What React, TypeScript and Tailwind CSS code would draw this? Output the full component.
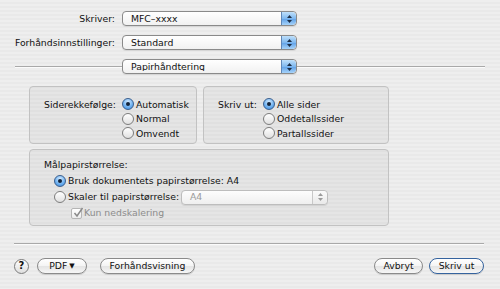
import React from 'react';

const FONT = "font-['DejaVu_Sans',_'Liberation_Sans',_sans-serif]";

function Stepper({ disabled }: { disabled?: boolean }) {
  return (
    <div
      className={
        'flex h-full w-[15px] shrink-0 flex-col items-center justify-center gap-[2px] rounded-r-[4px] border-l ' +
        (disabled
          ? 'border-[#c8c8c8] bg-[linear-gradient(#fbfbfb,#e9e9e9)]'
          : 'border-[#5f87b8] bg-[linear-gradient(#bfe0fb,#7fb8ef_50%,#5d9fe6_51%,#a6d3fa)]')
      }
    >
      <svg width="5" height="3" viewBox="0 0 5 3">
        <path d="M2.5 0L5 3H0z" fill={disabled ? '#9a9a9a' : '#1d2f48'} />
      </svg>
      <svg width="5" height="3" viewBox="0 0 5 3">
        <path d="M0 0h5L2.5 3z" fill={disabled ? '#9a9a9a' : '#1d2f48'} />
      </svg>
    </div>
  );
}

function Popup({ text, className, disabled }: { text: string; className: string; disabled?: boolean }) {
  return (
    <div
      className={
        'flex h-[15px] items-center overflow-hidden rounded-[4px] border shadow-[0_1px_0_rgba(0,0,0,0.08)] ' +
        (disabled
          ? 'border-[#bdbdbd] bg-[linear-gradient(#fdfdfd,#efefef)] text-[#9a9a9a] '
          : 'border-[#8a8a8a] bg-[linear-gradient(#ffffff,#f1f1f1)] text-[#111] ') +
        className
      }
    >
      <span className="flex-1 truncate pl-[8px] leading-none">{text}</span>
      <Stepper disabled={disabled} />
    </div>
  );
}

function Radio({ checked, label }: { checked?: boolean; label: string }) {
  return (
    <div className="flex h-[14.5px] items-center gap-[2px]">
      <span
        className={
          'flex h-[12px] w-[12px] items-center justify-center rounded-full border ' +
          (checked
            ? 'border-[#3b5f8e] bg-[radial-gradient(circle_at_50%_30%,#d4ebff,#6aaeef_60%,#3d86d8)]'
            : 'border-[#7c7c7c] bg-[linear-gradient(#ffffff,#e0e0e0)]')
        }
      >
        {checked && <span className="h-[4px] w-[4px] rounded-full bg-[#12233a]" />}
      </span>
      <span className="leading-none">{label}</span>
    </div>
  );
}

function Pill({ children, className }: { children: React.ReactNode; className: string }) {
  return (
    <div
      className={
        'flex h-[16px] items-center justify-center rounded-full border border-[#8a8a8a] bg-[linear-gradient(#ffffff,#f4f4f4_50%,#e4e4e4_51%,#f6f6f6)] leading-none shadow-[0_1px_0_rgba(0,0,0,0.12)] ' +
        className
      }
    >
      {children}
    </div>
  );
}

function Rule({ className }: { className: string }) {
  return <div className={'h-[2px] border-t border-[#a9a9a9] border-b border-b-[#fbfbfb] ' + className} />;
}

export default function App() {
  return (
    <div
      className={
        FONT +
        ' flex h-[289px] w-[500px] flex-col overflow-hidden bg-[repeating-linear-gradient(#eeeeee_0px,#eeeeee_2px,#e9e9e9_2px,#e9e9e9_4px)] text-[9.3px] text-[#111]'
      }
    >
      {/* printer + presets */}
      <div className="mt-[11px] flex items-center">
        <div className="w-[119px] pr-[4px] text-right leading-none">Skriver:</div>
        <Popup text="MFC–xxxx" className="ml-[3px] w-[175px]" />
      </div>
      <div className="mt-[9px] flex items-center">
        <div className="w-[119px] pr-[4px] text-right leading-none">Forhåndsinnstillinger:</div>
        <Popup text="Standard" className="ml-[3px] w-[175px]" />
      </div>
      <div className="mt-[9px] flex items-center">
        <Rule className="ml-[15px] w-[107px]" />
        <Popup text="Papirhåndtering" className="w-[175px]" />
        <Rule className="w-[188px]" />
      </div>

      {/* option panels */}
      <div className="ml-[29px] mt-[12px] flex w-[360px] flex-col gap-[5px]">
        <div className="flex gap-[6px]">
          <div className="flex h-[58px] w-[168px] rounded-[4px] border border-[#c2c2c2] bg-black/[0.035] pl-[14px] pt-[10px]">
            <div className="w-[78px] pt-[3px] leading-none">Siderekkefølge:</div>
            <div className="flex flex-col">
              <Radio checked label="Automatisk" />
              <Radio label="Normal" />
              <Radio label="Omvendt" />
            </div>
          </div>
          <div className="flex h-[58px] flex-1 rounded-[4px] border border-[#c2c2c2] bg-black/[0.035] pl-[14px] pt-[10px]">
            <div className="w-[45px] pt-[3px] leading-none">Skriv ut:</div>
            <div className="flex flex-col">
              <Radio checked label="Alle sider" />
              <Radio label="Oddetallssider" />
              <Radio label="Partallssider" />
            </div>
          </div>
        </div>

        <div className="flex h-[77px] flex-col rounded-[4px] border border-[#c2c2c2] bg-black/[0.035] pl-[14px] pt-[8px]">
          <div className="flex h-[14px] items-center leading-none">Målpapirstørrelse:</div>
          <div className="ml-[10px] mt-[1px] flex flex-col">
            <div className="flex h-[16px] items-center">
              <Radio checked label="Bruk dokumentets papirstørrelse:  A4" />
            </div>
            <div className="flex h-[16px] items-center">
              <div className="w-[127px]">
                <Radio label="Skaler til papirstørrelse:" />
              </div>
              <Popup text="A4" disabled className="w-[147px]" />
            </div>
            <div className="ml-[17px] flex h-[16px] items-center gap-[2px] text-[#8c8c8c]">
              <span className="relative h-[11px] w-[11px] rounded-[2px] border border-[#b5b5b5] bg-[linear-gradient(#ffffff,#ececec)]">
                <svg className="absolute -top-[2px] left-[1px]" width="11" height="11" viewBox="0 0 11 11">
                  <path d="M1.5 6l2.5 3L9.5 1" fill="none" stroke="#8a8a8a" strokeWidth="1.5" />
                </svg>
              </span>
              <span className="leading-none">Kun nedskalering</span>
            </div>
          </div>
        </div>
      </div>

      {/* bottom bar */}
      <Rule className="ml-[14px] mt-[17px] w-[470px]" />
      <div className="ml-[14px] mt-[13px] flex w-[470px] items-center">
        <div className="flex h-[15px] w-[15px] items-center justify-center rounded-full border border-[#7c7c7c] bg-[linear-gradient(#ffffff,#dedede)] text-[10px] font-bold leading-none">
          ?
        </div>
        <Pill className="ml-[8px] w-[50px] gap-[2px]">
          PDF <span className="text-[7px]">▼</span>
        </Pill>
        <Pill className="ml-[13px] w-[95px]">Forhåndsvisning</Pill>
        <div className="flex-1" />
        <Pill className="w-[49px]">Avbryt</Pill>
        <Pill className="ml-[6px] w-[55px] border-[#35639e] bg-[linear-gradient(#c9e6ff,#8cc3f6_50%,#5ea4ea_51%,#a9dafd)]">
          Skriv ut
        </Pill>
      </div>
    </div>
  );
}
